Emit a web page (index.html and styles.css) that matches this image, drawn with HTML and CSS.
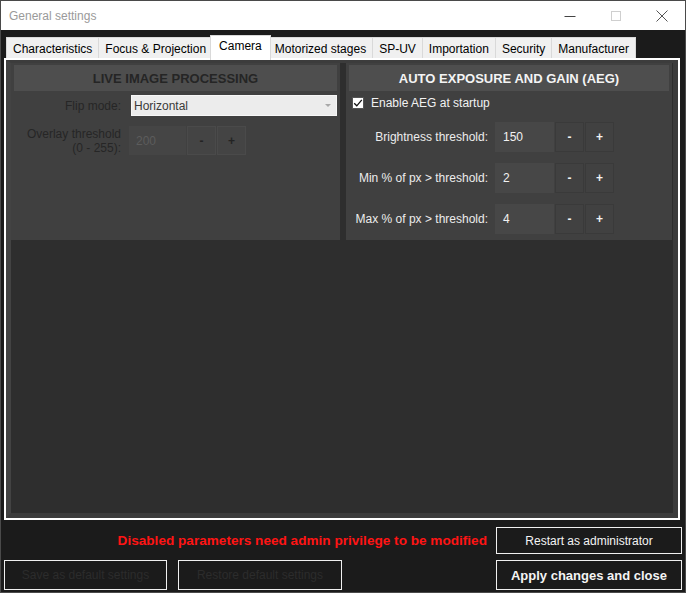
FILE: index.html
```html
<!DOCTYPE html>
<html>
<head>
<meta charset="utf-8">
<title>General settings</title>
<link rel="stylesheet" href="styles.css">
</head>
<body>
<div class="window">
  <div class="titlebar">
    <span class="title">General settings</span>
    <div class="controls">
      <div class="ctl"><svg width="12" height="12" viewBox="0 0 12 12"><path d="M0.5 6.5H11.5" stroke="#444" stroke-width="1"/></svg></div>
      <div class="ctl"><svg width="12" height="12" viewBox="0 0 12 12"><rect x="1.5" y="1.5" width="9" height="9" fill="none" stroke="#cfcfcf" stroke-width="1"/></svg></div>
      <div class="ctl"><svg width="12" height="12" viewBox="0 0 12 12"><path d="M0.5 0.5L11.5 11.5M11.5 0.5L0.5 11.5" stroke="#555" stroke-width="1"/></svg></div>
    </div>
  </div>

  <div class="tabs">
    <div class="tab">Characteristics</div>
    <div class="tab">Focus &amp; Projection</div>
    <div class="tab active">Camera</div>
    <div class="tab">Motorized stages</div>
    <div class="tab">SP-UV</div>
    <div class="tab">Importation</div>
    <div class="tab">Security</div>
    <div class="tab">Manufacturer</div>
  </div>

  <div class="tabpage">
    <div class="page-inner">
      <div class="panels">
        <section class="panel disabled">
          <div class="panel-head">LIVE IMAGE PROCESSING</div>
          <div class="row flip-row">
            <span class="label lbl-left">Flip mode:</span>
            <div class="combo"><span>Horizontal</span><span class="arrow"></span></div>
          </div>
          <div class="row spin-row left-spin">
            <span class="label lbl-left">Overlay threshold<br>(0 - 255):</span>
            <div class="spinner">
              <div class="num num-left">200</div>
              <div class="btn">-</div>
              <div class="btn">+</div>
            </div>
          </div>
        </section>

        <section class="panel">
          <div class="panel-head">AUTO EXPOSURE AND GAIN (AEG)</div>
          <div class="check-row">
            <span class="checkbox"><svg width="10" height="10" viewBox="0 0 10 10"><path d="M1.2 5.2L3.8 7.8L8.8 1.8" fill="none" stroke="#111" stroke-width="1.3"/></svg></span>
            <span>Enable AEG at startup</span>
          </div>
          <div class="rows">
            <div class="row spin-row">
              <span class="label lbl-right">Brightness threshold:</span>
              <div class="spinner">
                <div class="num">150</div>
                <div class="btn">-</div>
                <div class="btn">+</div>
              </div>
            </div>
            <div class="row spin-row">
              <span class="label lbl-right">Min % of px &gt; threshold:</span>
              <div class="spinner">
                <div class="num">2</div>
                <div class="btn">-</div>
                <div class="btn">+</div>
              </div>
            </div>
            <div class="row spin-row">
              <span class="label lbl-right">Max % of px &gt; threshold:</span>
              <div class="spinner">
                <div class="num">4</div>
                <div class="btn">-</div>
                <div class="btn">+</div>
              </div>
            </div>
          </div>
        </section>
      </div>
    </div>
  </div>

  <div class="footer">
    <div class="foot-row top">
      <span class="warning">Disabled parameters need admin privilege to be modified</span>
      <button class="fbtn restart">Restart as administrator</button>
    </div>
    <div class="foot-row bottom">
      <button class="fbtn off save">Save as default settings</button>
      <button class="fbtn off restore">Restore default settings</button>
      <button class="fbtn apply">Apply changes and close</button>
    </div>
  </div>
</div>
</body>
</html>
```

FILE: styles.css
```css
* { box-sizing: border-box; }
html, body { margin: 0; padding: 0; }
body {
  width: 686px;
  height: 593px;
  overflow: hidden;
  font-family: "Liberation Sans", Arial, sans-serif;
  font-size: 12px;
  background: #1b1b1b;
}
.window {
  width: 686px;
  height: 593px;
  border: 1px solid #4a4a4a;
  background: #1b1b1b;
  display: flex;
  flex-direction: column;
}

/* title bar */
.titlebar {
  height: 29px;
  flex-shrink: 0;
  background: #ffffff;
  display: flex;
  align-items: center;
}
.title {
  margin-left: 8px;
  color: #9a9a9a;
  font-size: 12px;
  padding-top: 1px;
}
.controls { margin-left: auto; display: flex; height: 100%; }
.ctl {
  width: 46px;
  height: 29px;
  display: flex;
  align-items: center;
  justify-content: center;
}

/* tabs */
.tabs {
  height: 28px;
  flex-shrink: 0;
  display: flex;
  align-items: flex-end;
  padding-left: 5px;
}
.tab {
  height: 21px;
  padding: 0 6px;
  background: #f0f0f0;
  border: 1px solid #d9d9d9;
  border-bottom: none;
  border-left: none;
  color: #000;
  font-size: 12px;
  line-height: 20px;
  padding-top: 1px;
  white-space: nowrap;
}
.tab:first-child { border-left: 1px solid #d9d9d9; }
.tab.active {
  position: relative;
  z-index: 1;
  height: 25px;
  margin: 0 -2px -2px -3px;
  padding: 0 8px;
  background: #ffffff;
  border: 1px solid #d9d9d9;
  border-bottom: none;
  line-height: 20px;
}

/* tab page */
.tabpage {
  height: 462px;
  flex-shrink: 0;
  margin: 0 5px 0 3px;
  border: 2px solid #ffffff;
}
.page-inner {
  height: 100%;
  border: 5px solid #3c3c3c;
  border-top-width: 3px;
  border-left-color: #434343;
  background: #2e2e2e;
}
.panels {
  display: flex;
  gap: 6px;
  padding-right: 1px;
}
.panel {
  height: 177px;
  background: #404040;
  padding: 2px 3px 3px;
  color: #ececec;
}
.panel:first-child { width: 329px; }
.panel:last-child { flex: 1; }
.panel-head {
  height: 26px;
  background: #4e4e4e;
  color: #f4f4f4;
  font-weight: bold;
  font-size: 13px;
  display: flex;
  align-items: center;
  justify-content: center;
  padding-top: 1px;
}
.panel.disabled .panel-head { color: #252525; }

.row { display: flex; align-items: center; }
.label { text-align: right; flex-shrink: 0; line-height: 14px; }
.lbl-left { width: 107px; color: #262626; font-size: 12px; }
.lbl-right { width: 139px; color: #ececec; font-size: 12px; }

.flip-row { margin-top: 4px; height: 21px; }
.combo {
  margin-left: 10px;
  width: 206px;
  height: 21px;
  background: #ececec;
  border: 1px solid #f7f7f7;
  display: flex;
  align-items: center;
  padding-left: 2px;
  color: #3a3a3a;
  font-size: 12px;
}
.arrow {
  margin-left: auto;
  margin-right: 5px;
  width: 0;
  height: 0;
  border-left: 3px solid transparent;
  border-right: 3px solid transparent;
  border-top: 3px solid #a8a8a8;
}

.spin-row { height: 30px; }
.left-spin { margin-top: 10px; height: 29px; }
.left-spin .spinner { margin-left: 8px; }
.spinner { display: flex; gap: 1px; margin-left: 7px; height: 100%; }
.num {
  width: 59px;
  height: 100%;
  background: #474747;
  color: #f2f2f2;
  font-size: 12px;
  padding-left: 8px;
  display: flex;
  align-items: center;
}
.num-left { width: 57px; padding-left: 7px; background: #454545; color: #5c5c5c; }
.btn {
  width: 29px;
  height: 100%;
  background: #414141;
  border: 1px solid #3a3a3a;
  color: #f2f2f2;
  font-weight: bold;
  font-size: 12px;
  display: flex;
  align-items: center;
  justify-content: center;
}
.disabled .btn { background: #444444; border-color: #4a4a4a; color: #232323; }

.check-row {
  margin-top: 6px;
  height: 12px;
  display: flex;
  align-items: center;
  gap: 7px;
  padding-left: 3px;
  font-size: 12px;
  color: #f2f2f2;
}
.checkbox {
  width: 12px;
  height: 12px;
  background: #ffffff;
  border: 1px solid #555;
  display: flex;
  align-items: center;
  justify-content: center;
}
.rows {
  margin-top: 13px;
  display: flex;
  flex-direction: column;
  gap: 11px;
}

/* footer */
.footer {
  flex: 1;
  padding: 7px 3px 0 3px;
  display: flex;
  flex-direction: column;
  gap: 6px;
}
.foot-row { display: flex; align-items: center; }
.foot-row.top { justify-content: flex-end; gap: 9px; }
.warning {
  color: #ff1414;
  font-weight: bold;
  font-size: 13.6px;
}
.fbtn {
  font-family: "Liberation Sans", Arial, sans-serif;
  background: #1b1b1b;
  border: 1px solid #f0f0f0;
  color: #f4f4f4;
  font-size: 12px;
  padding: 0;
  margin: 0;
}
.restart { width: 186px; height: 27px; }
.bottom .fbtn { height: 30px; }
.save { width: 163px; }
.restore { width: 164px; margin-left: 11px; }
.off { color: #2c2c2c; }
.apply { width: 186px; margin-left: auto; font-weight: bold; font-size: 13px; }
```
